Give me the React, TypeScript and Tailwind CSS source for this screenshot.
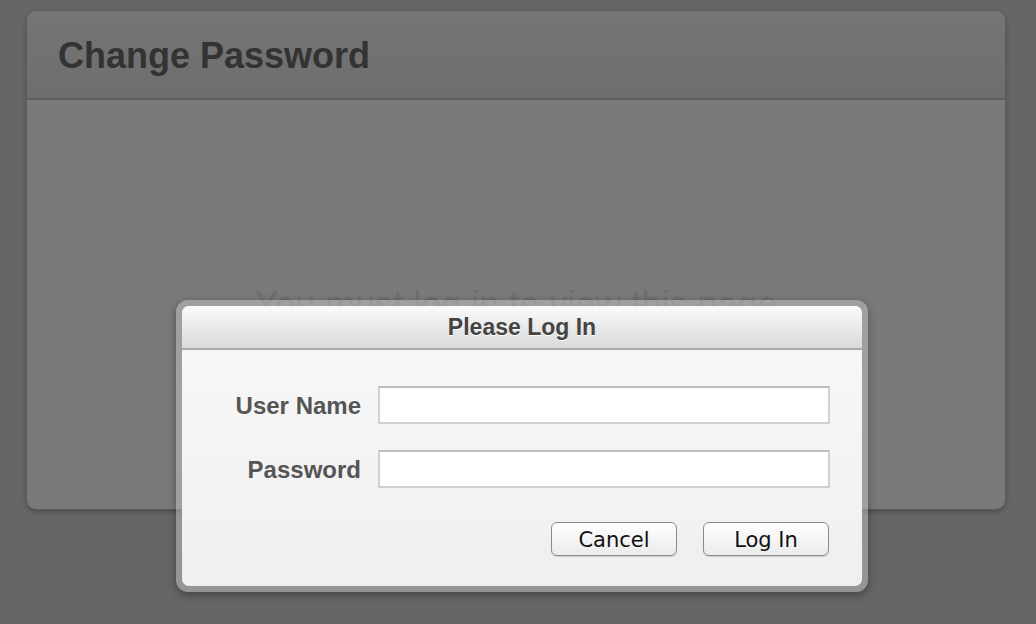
import { useState } from "react";

const LoginDialog = () => {
  const [user, setUser] = useState("");
  const [pass, setPass] = useState("");

  return (
    <div className="absolute left-[176px] top-[300px] w-[692px] h-[292px] rounded-[12px] p-[6px] bg-[rgba(206,206,206,0.45)] shadow-[0_3px_10px_rgba(0,0,0,0.35)]">
      <div className="w-full h-full rounded-[7px] overflow-hidden flex flex-col bg-gradient-to-b from-[#f9f9f9] to-[#efefef]">
        {/* Title bar */}
        <div className="h-[44px] shrink-0 flex items-center justify-center pt-[1px] border-b-2 border-[#a8a8a8] bg-gradient-to-b from-[#fbfbfb] to-[#d9d9d9]">
          <h2 className="text-[23px] font-bold text-[#444] [text-shadow:0_1px_0_#fff] font-['Liberation_Sans',Arial,sans-serif]">
            Please Log In
          </h2>
        </div>

        {/* Form */}
        <div className="flex-1 pt-[36px] pr-[32px] font-['Liberation_Sans',Arial,sans-serif]">
          <div className="grid grid-cols-[179px_1fr] gap-x-[17px] gap-y-[26px] items-center">
            <label className="text-right text-[24px] font-bold text-[#555] pt-[1px]">User Name</label>
            <input
              value={user}
              onChange={(e) => setUser(e.target.value)}
              className="h-[38px] bg-white border-2 border-[#d0d0d0] border-t-[#bdbdbd] outline-none px-2 text-lg"
            />
            <label className="text-right text-[24px] font-bold text-[#555] pt-[1px]">Password</label>
            <input
              type="password"
              value={pass}
              onChange={(e) => setPass(e.target.value)}
              className="h-[38px] bg-white border-2 border-[#d0d0d0] border-t-[#bdbdbd] outline-none px-2 text-lg"
            />
          </div>

          {/* Buttons */}
          <div className="flex justify-end gap-[26px] mt-[34px] pr-[1px]">
            <button className="w-[126px] h-[34px] pt-[3px] rounded-[6px] border border-[#8c8c8c] bg-gradient-to-b from-white to-[#ebebeb] shadow-[0_1px_1px_rgba(0,0,0,0.15)] text-[21px] leading-none text-[#111] font-['DejaVu_Sans',sans-serif]">
              Cancel
            </button>
            <button className="w-[126px] h-[34px] pt-[3px] rounded-[6px] border border-[#8c8c8c] bg-gradient-to-b from-white to-[#ebebeb] shadow-[0_1px_1px_rgba(0,0,0,0.15)] text-[21px] leading-none text-[#111] font-['DejaVu_Sans',sans-serif]">
              Log In
            </button>
          </div>
        </div>
      </div>
    </div>
  );
};

export default function App() {
  return (
    <div className="relative w-[1036px] h-[624px] bg-[#666666] pt-[10px] px-[26px] overflow-hidden font-['Liberation_Sans',Arial,sans-serif]">
      {/* Page card */}
      <div className="w-[980px] h-[500px] rounded-[10px] border border-[#5c5c5c] bg-[#7a7a7a] shadow-[0_2px_4px_rgba(0,0,0,0.25)] overflow-hidden flex flex-col">
        <div className="h-[89px] shrink-0 flex items-center pl-[31px] pt-[2px] bg-gradient-to-b from-[#757575] to-[#6e6e6e] border-b-2 border-[#5e5e5e]">
          <h1 className="text-[36px] font-bold text-[#333]">Change Password</h1>
        </div>
        <div className="flex-1 flex items-center justify-center">
          <p className="text-[36px] text-[#6d6d6d]">You must log in to view this page</p>
        </div>
      </div>

      <LoginDialog />
    </div>
  );
}
